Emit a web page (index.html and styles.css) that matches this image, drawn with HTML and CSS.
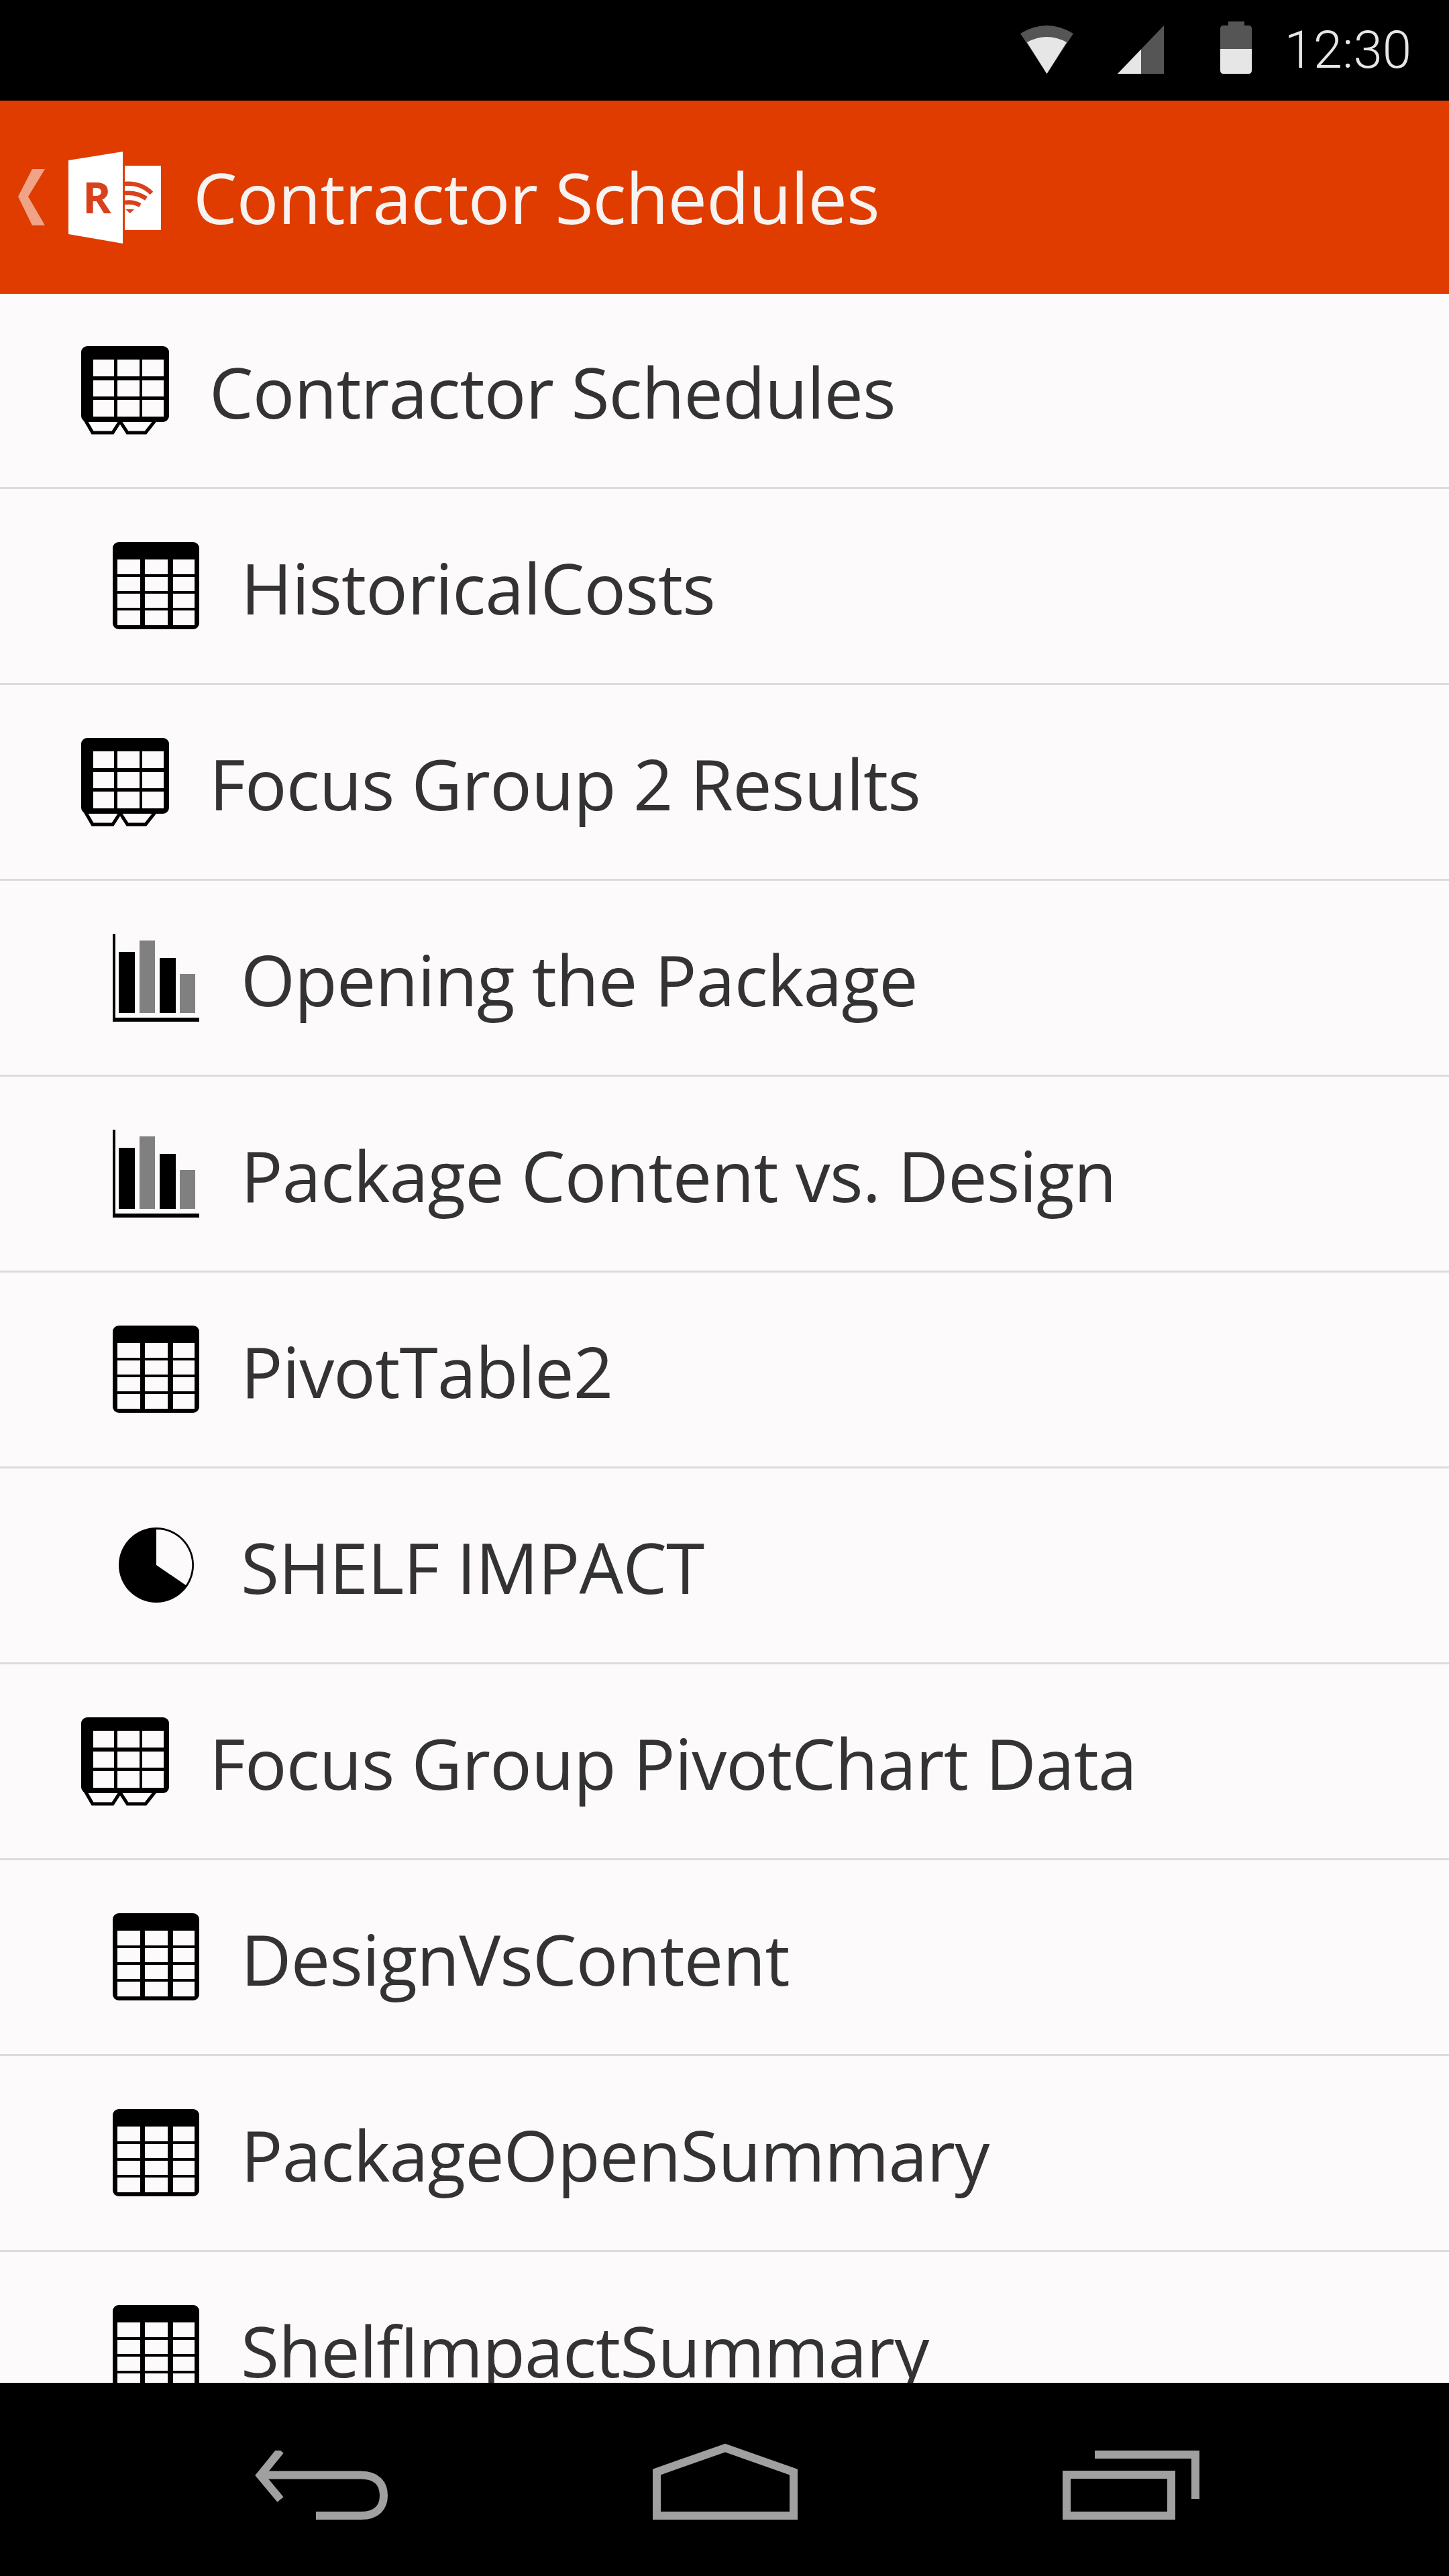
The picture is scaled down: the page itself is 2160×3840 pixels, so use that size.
FILE: index.html
```html
<!DOCTYPE html>
<html lang="en">
<head>
<meta charset="utf-8">
<title>Contractor Schedules</title>
<link rel="stylesheet" href="styles.css">
</head>
<body>
<svg class="defs" aria-hidden="true">
  <defs>
    <symbol id="i-linked" viewBox="0 0 132 132">
      <rect x="0" y="0" width="131" height="113" rx="9" fill="#000"/>
      <g fill="#fcfafb">
        <rect x="18" y="20" width="31" height="25"/><rect x="54" y="20" width="33" height="25"/><rect x="91" y="20" width="32" height="25"/>
        <rect x="18" y="51" width="31" height="24"/><rect x="54" y="51" width="33" height="24"/><rect x="91" y="51" width="32" height="24"/>
        <rect x="18" y="80" width="31" height="25"/><rect x="54" y="80" width="33" height="25"/><rect x="91" y="80" width="32" height="25"/>
      </g>
      <path d="M6 110 L17 129 H47 L58 112 L69 129 H96 L111 110" fill="none" stroke="#000" stroke-width="5"/>
    </symbol>
    <symbol id="i-table" viewBox="0 0 132 132">
      <rect x="0" y="0" width="129" height="130" rx="9" fill="#000"/>
      <g fill="#fcfafb">
        <rect x="7" y="26" width="34" height="22"/><rect x="48" y="26" width="34" height="22"/><rect x="90" y="26" width="32" height="22"/>
        <rect x="7" y="52" width="34" height="21"/><rect x="48" y="52" width="34" height="21"/><rect x="90" y="52" width="32" height="21"/>
        <rect x="7" y="77" width="34" height="21"/><rect x="48" y="77" width="34" height="21"/><rect x="90" y="77" width="32" height="21"/>
        <rect x="7" y="102" width="34" height="22"/><rect x="48" y="102" width="34" height="22"/><rect x="90" y="102" width="32" height="22"/>
      </g>
    </symbol>
    <symbol id="i-chart" viewBox="0 0 132 132">
      <rect x="0" y="0" width="4" height="131" fill="#000"/>
      <rect x="0" y="125" width="129" height="6" fill="#000"/>
      <rect x="9" y="27" width="24" height="91" fill="#000"/>
      <rect x="40" y="10" width="23" height="108" fill="#808080"/>
      <rect x="70" y="36" width="24" height="82" fill="#000"/>
      <rect x="100" y="60" width="23" height="58" fill="#808080"/>
    </symbol>
    <symbol id="i-pie" viewBox="0 0 132 132">
      <circle cx="65" cy="65" r="56" fill="#000"/>
      <path d="M65 65 V12 A53 53 0 0 1 109 95 Z" fill="#fcfafb"/>
    </symbol>
  </defs>
</svg>

<div class="phone">
  <div class="status">
    <svg class="st-wifi" viewBox="0 0 79 72"><path d="M39.5 72 L0 12 Q39.5 -12 79 12 Z" fill="#555"/><path d="M39.5 72 L10 25 Q39.5 9 69 25 Z" fill="#e6e6e6"/></svg>
    <svg class="st-signal" viewBox="0 0 69 72"><path d="M0 72 L69 0 V72 Z" fill="#555"/><path d="M0 72 L35 35.5 V72 Z" fill="#e6e6e6"/></svg>
    <svg class="st-battery" viewBox="0 0 47 78"><rect x="12" y="0" width="24" height="8" fill="#555"/><path d="M0 41 V11 Q0 6 5 6 H42 Q47 6 47 11 V41 Z" fill="#555"/><path d="M0 41 H47 V73 Q47 78 42 78 H5 Q0 78 0 73 Z" fill="#e6e6e6"/></svg>
    <span class="time">12:30</span>
  </div>

  <header class="appbar">
    <svg class="chevron" viewBox="0 0 40 84"><polygon points="21,0 40,0 15,41 40,84 21,84 0,41" fill="#efa488"/></svg>
    <svg class="logo" viewBox="0 0 138 137">
      <polygon points="0,13 81,0 81,137 0,123" fill="#fff"/>
      <rect x="84" y="21" width="54" height="96" fill="#fff"/>
      <text class="logo-r" x="21" y="92">R</text>
      <g fill="none" stroke="#d9401c" stroke-width="6.5">
        <path d="M84 48 Q108 46 124 62"/>
        <path d="M84 62 Q102 60 116 70"/>
        <path d="M84 76 Q96 74 107 80"/>
      </g>
      <polygon points="85,86 98,86 92,92" fill="#d9401c"/>
    </svg>
    <h1 class="title">Contractor Schedules</h1>
  </header>

  <main class="list">
    <div class="row row-top"><svg class="icon"><use href="#i-linked"/></svg><span class="label">Contractor Schedules</span></div>
    <div class="row row-sub"><svg class="icon"><use href="#i-table"/></svg><span class="label">HistoricalCosts</span></div>
    <div class="row row-top"><svg class="icon"><use href="#i-linked"/></svg><span class="label">Focus Group 2 Results</span></div>
    <div class="row row-sub"><svg class="icon"><use href="#i-chart"/></svg><span class="label">Opening the Package</span></div>
    <div class="row row-sub"><svg class="icon"><use href="#i-chart"/></svg><span class="label">Package Content vs. Design</span></div>
    <div class="row row-sub"><svg class="icon"><use href="#i-table"/></svg><span class="label">PivotTable2</span></div>
    <div class="row row-sub"><svg class="icon"><use href="#i-pie"/></svg><span class="label">SHELF IMPACT</span></div>
    <div class="row row-top"><svg class="icon"><use href="#i-linked"/></svg><span class="label">Focus Group PivotChart Data</span></div>
    <div class="row row-sub"><svg class="icon"><use href="#i-table"/></svg><span class="label">DesignVsContent</span></div>
    <div class="row row-sub"><svg class="icon"><use href="#i-table"/></svg><span class="label">PackageOpenSummary</span></div>
    <div class="row row-sub"><svg class="icon"><use href="#i-table"/></svg><span class="label">ShelfImpactSummary</span></div>
  </main>

  <nav class="navbar">
    <svg class="nav-back" viewBox="0 0 198 103"><g fill="none" stroke="#a0a0a0" stroke-width="12"><path d="M38 0 L8 37 L38 73"/><path d="M12 36.5 H158 C182 36.5 192 50 192 67 C192 84 182 97 158 97 H91"/></g></svg>
    <svg class="nav-home" viewBox="0 0 216 114"><path d="M6 43 L108 7 L210 43 V108 H6 Z" fill="none" stroke="#a0a0a0" stroke-width="12"/></svg>
    <svg class="nav-recent" viewBox="0 0 204 103"><g fill="none" stroke="#a0a0a0" stroke-width="12"><rect x="6" y="36" width="156" height="61"/><path d="M48 6 H198 V72"/></g></svg>
  </nav>
</div>
</body>
</html>
```

FILE: styles.css
```css
* { box-sizing: border-box; }

html, body {
  margin: 0;
  padding: 0;
  background: #000;
}

.defs {
  position: absolute;
  width: 0;
  height: 0;
}

.phone {
  width: 2160px;
  height: 3840px;
  display: flex;
  flex-direction: column;
  overflow: hidden;
  font-family: "Open Sans", "Noto Sans", sans-serif;
}

/* status bar */
.status {
  height: 150px;
  flex: none;
  background: #000;
  display: flex;
  justify-content: flex-end;
  align-items: flex-end;
  padding: 0 56px 40px 0;
}
.st-wifi { width: 79px; height: 72px; }
.st-signal { width: 69px; height: 72px; margin-left: 66px; }
.st-battery { width: 47px; height: 78px; margin-left: 84px; }
.time {
  margin-left: 49px;
  margin-bottom: -4px;
  font-family: Roboto, sans-serif;
  font-weight: 300;
  font-size: 78px;
  line-height: 78px;
  color: #e6e6e6;
}

/* app bar */
.appbar {
  height: 288px;
  flex: none;
  background: #e03c00;
  display: flex;
  align-items: center;
  padding-left: 27px;
}
.chevron { width: 40px; height: 84px; margin-top: -1px; }
.logo { width: 138px; height: 137px; margin-left: 35px; margin-top: 13px; margin-bottom: 13px; }
.logo-r {
  font-family: "Open Sans", sans-serif;
  font-weight: 700;
  font-size: 65px;
  fill: #d9401c;
}
.title {
  margin: 0 0 0 48px;
  font-weight: 400;
  font-size: 104px;
  line-height: 1.2;
  letter-spacing: -0.8px;
  color: #f7f3f1;
}

/* list */
.list {
  flex: 1;
  min-height: 0;
  overflow: hidden;
  background: #fcfafb;
}
.row {
  height: 291px;
  margin-bottom: 1px;
  border-bottom: 3px solid #dcdcdc;
  display: flex;
  align-items: center;
  gap: 59px;
  color: #333;
}
.row-top { padding-left: 121px; }
.row-sub { padding-left: 168px; }
.icon {
  width: 132px;
  height: 132px;
  flex: none;
}
.label {
  margin-top: 4px;
  font-size: 104px;
  line-height: 1.2;
  letter-spacing: -0.8px;
  white-space: nowrap;
}

/* navigation bar */
.navbar {
  height: 288px;
  flex: none;
  background: #000;
  display: flex;
  align-items: flex-end;
  gap: 395px;
  padding: 0 0 84px 380px;
}
.nav-back { width: 198px; height: 103px; }
.nav-home { width: 216px; height: 114px; }
.nav-recent { width: 204px; height: 103px; }
```
